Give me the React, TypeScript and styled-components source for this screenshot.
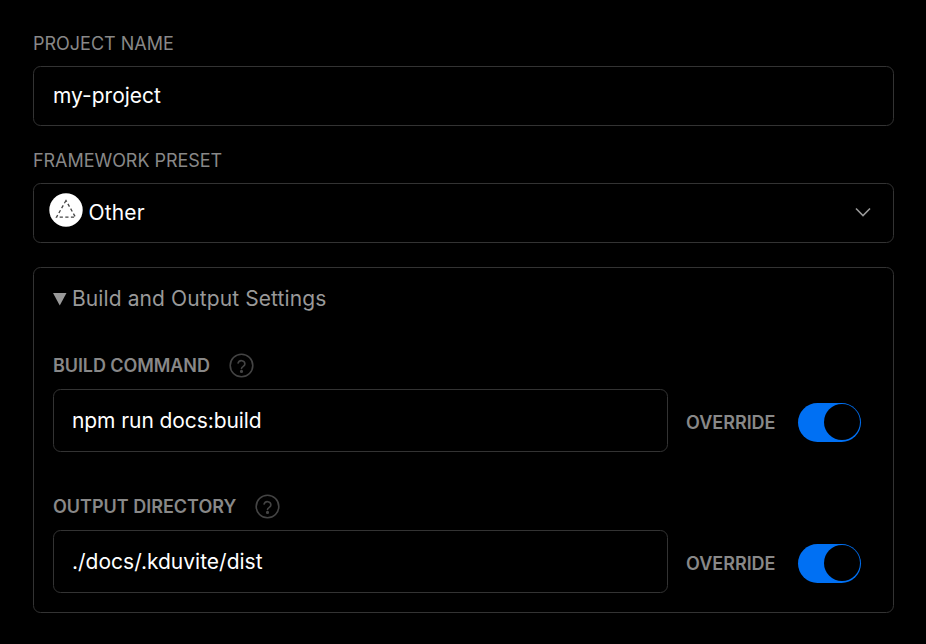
import React from "react";
import styled, { createGlobalStyle } from "styled-components";

const GlobalStyle = createGlobalStyle`
  *, *::before, *::after { box-sizing: border-box; }
  body { margin: 0; background: #000; }
`;

const Page = styled.main`
  height: 644px;
  padding: 35px 32px 0 33px;
  background: #000;
  color: #fff;
  font-family: Inter, "Liberation Sans", sans-serif;
  font-size: 21px;
  overflow: hidden;
`;

const Field = styled.div<{ $gap: number }>`
  display: flex;
  flex-direction: column;
  gap: 13px;
  margin-bottom: ${(p) => p.$gap}px;
`;

const Label = styled.label<{ $strong?: boolean; $spacing?: number }>`
  height: 18px;
  line-height: 18px;
  font-size: 18px;
  font-weight: ${(p) => (p.$strong ? 600 : 400)};
  letter-spacing: ${(p) => p.$spacing ?? 0}px;
  color: #888;
  text-transform: uppercase;
  white-space: nowrap;
`;

const Control = styled.div<{ $height: number; $pad: number; $width?: number }>`
  display: flex;
  align-items: center;
  flex: none;
  width: ${(p) => (p.$width ? `${p.$width}px` : "100%")};
  height: ${(p) => p.$height}px;
  padding: 0 22.5px 0 ${(p) => p.$pad}px;
  border: 1px solid #333;
  border-radius: 7.5px;
  white-space: nowrap;
`;

const Value = styled.span<{ $spacing?: number }>`
  line-height: 30px;
  letter-spacing: ${(p) => p.$spacing ?? 0}px;
`;

const PresetIcon = styled.svg`
  display: block;
  width: 34px;
  height: 34px;
  margin: 0 5.5px 6px 0;
`;

const Chevron = styled.svg`
  display: block;
  margin: 0 0 2px auto;
`;

const Panel = styled.section`
  height: 346px;
  padding: 16px 19px 0;
  border: 1px solid #333;
  border-radius: 7.5px;
`;

const Summary = styled.div`
  display: flex;
  align-items: center;
  gap: 5px;
  height: 30px;
  margin-bottom: 39px;
  color: #999;
`;

const Setting = styled.div`
  margin-bottom: 42px;
`;

const SettingHead = styled.div`
  display: flex;
  align-items: center;
  gap: 19px;
  height: 25px;
  margin-bottom: 11px;
`;

const SettingRow = styled.div`
  display: flex;
  align-items: center;
  height: 63px;
`;

const OverrideLabel = styled(Label)`
  width: 112px;
  margin: 4px 0 0 18px;
`;

const Toggle = styled.div`
  display: flex;
  justify-content: flex-end;
  align-items: center;
  width: 63px;
  height: 39px;
  margin-top: 3px;
  padding: 1px;
  border-radius: 20px;
  background: #0070f3;
`;

const Thumb = styled.div`
  width: 36.5px;
  height: 36.5px;
  border-radius: 50%;
  background: #000;
`;

const HelpIcon = () => (
  <svg width="25" height="25" viewBox="0 0 25 25" fill="none" stroke="#444" strokeWidth="1.6" strokeLinecap="round">
    <circle cx="12.5" cy="12.5" r="11.3" />
    <path d="M9.1 10a3.5 3.5 0 0 1 6.8 1.1c0 2.3-3.4 2.6-3.4 4.3" />
    <circle cx="12.5" cy="18.4" r="0.8" fill="#444" />
  </svg>
);

type OverrideProps = {
  label: string;
  value: string;
  labelSpacing: number;
  valueSpacing: number;
};

const OverrideSetting = ({ label, value, labelSpacing, valueSpacing }: OverrideProps) => (
  <Setting>
    <SettingHead>
      <Label $strong $spacing={labelSpacing}>{label}</Label>
      <HelpIcon />
    </SettingHead>
    <SettingRow>
      <Control $height={63} $pad={18} $width={615}>
        <Value $spacing={valueSpacing}>{value}</Value>
      </Control>
      <OverrideLabel $strong>Override</OverrideLabel>
      <Toggle role="switch" aria-checked="true" aria-label={`Override ${label}`}>
        <Thumb />
      </Toggle>
    </SettingRow>
  </Setting>
);

export default function App() {
  return (
    <>
      <GlobalStyle />
      <Page>
        <Field $gap={26}>
          <Label>Project name</Label>
          <Control $height={60} $pad={19}>
            <Value>my-project</Value>
          </Control>
        </Field>
        <Field $gap={24}>
          <Label $spacing={-0.05}>Framework preset</Label>
          <Control $height={60} $pad={15}>
            <PresetIcon viewBox="0 0 34 34">
              <circle cx="17" cy="17" r="16.7" fill="#fff" />
              <path d="M17 7.5 7.5 24.2h19z" fill="none" stroke="#444" strokeWidth="1.3" strokeDasharray="3.2 2.4" />
            </PresetIcon>
            <Value $spacing={0.15}>Other</Value>
            <Chevron width="16" height="10" viewBox="0 0 16 10">
              <path d="M1 1.5 8 8.5l7-7" fill="none" stroke="#999" strokeWidth="1.6" />
            </Chevron>
          </Control>
        </Field>
        <Panel>
          <Summary>
            <svg width="14" height="13" viewBox="0 0 14 13">
              <path d="M0 0h13.5L6.75 12.5z" fill="#999" />
            </svg>
            <Value $spacing={0.1}>Build and Output Settings</Value>
          </Summary>
          <OverrideSetting label="Build command" value="npm run docs:build" labelSpacing={-0.08} valueSpacing={-0.08} />
          <OverrideSetting label="Output directory" value="./docs/.kduvite/dist" labelSpacing={0} valueSpacing={0} />
        </Panel>
      </Page>
    </>
  );
}
